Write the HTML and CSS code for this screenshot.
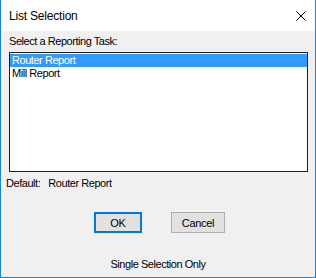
FILE: index.html
```html
<!DOCTYPE html>
<html lang="en">
<head>
    <meta charset="UTF-8">
    <title>List Selection</title>
    <link rel="stylesheet" href="styles.css">
</head>
<body>
    <div class="window">
        <div class="titlebar">
            <span class="title">List Selection</span>
            <svg class="close" width="10" height="10" viewBox="0 0 10 10">
                <path d="M0.5 0.5 L9.5 9.5 M9.5 0.5 L0.5 9.5" stroke="#000" stroke-width="1" fill="none"/>
            </svg>
        </div>
        <div class="content">
            <div class="label">Select a Reporting Task:</div>
            <ul class="listbox">
                <li class="selected">Router Report</li>
                <li>Mill Report</li>
            </ul>
            <div class="default">Default:<span class="default-value">Router Report</span></div>
            <div class="buttons">
                <button class="btn btn-default">OK</button>
                <button class="btn">Cancel</button>
            </div>
            <div class="status">Single Selection Only</div>
        </div>
    </div>
</body>
</html>
```

FILE: styles.css
```css
body {
    margin: 0;
    padding: 0;
    font-family: "Liberation Sans", Arial, sans-serif;
    font-size: 11px;
    letter-spacing: -0.45px;
    color: #000;
    background: #fff;
}
.window {
    width: 316px;
    height: 278px;
    box-sizing: border-box;
    border: 1px solid #1883d7;
    border-top: none;
    background: #f0f0f0;
    display: flex;
    flex-direction: column;
}
.titlebar {
    height: 31px;
    background: #fff;
    display: flex;
    align-items: center;
    justify-content: space-between;
    padding-left: 8px;
    padding-right: 9px;
}
.title {
    font-size: 12px;
    letter-spacing: -0.2px;
}
.close {
    display: block;
}
.content {
    padding-top: 4px;
}
.label {
    line-height: 13px;
    padding-left: 8px;
}
.listbox {
    list-style-type: none;
    margin: 4px 0 0 8px;
    padding: 1px 0 0 0;
    width: 299px;
    height: 120px;
    box-sizing: border-box;
    border: 1px solid #1e1e1e;
    background: #fff;
}
.listbox li {
    height: 13px;
    line-height: 13px;
    padding-left: 2px;
}
.listbox li.selected {
    background: #3399ff;
    color: #fff;
}
.default {
    margin-top: 5px;
    padding-left: 5px;
    line-height: 13px;
}
.default-value {
    margin-left: 8px;
}
.buttons {
    display: flex;
    gap: 29px;
    margin-top: 22px;
    padding-left: 93px;
}
.btn {
    font-family: "Liberation Sans", Arial, sans-serif;
    font-size: 11px;
    letter-spacing: -0.3px;
    color: #000;
    height: 21px;
    width: 54px;
    padding: 0;
    background: #e1e1e1;
    border: 1px solid #adadad;
    border-radius: 0;
}
.btn-default {
    width: 48px;
    border: 2px solid #0078d7;
}
.status {
    margin-top: 25px;
    text-align: center;
    line-height: 13px;
}
```
